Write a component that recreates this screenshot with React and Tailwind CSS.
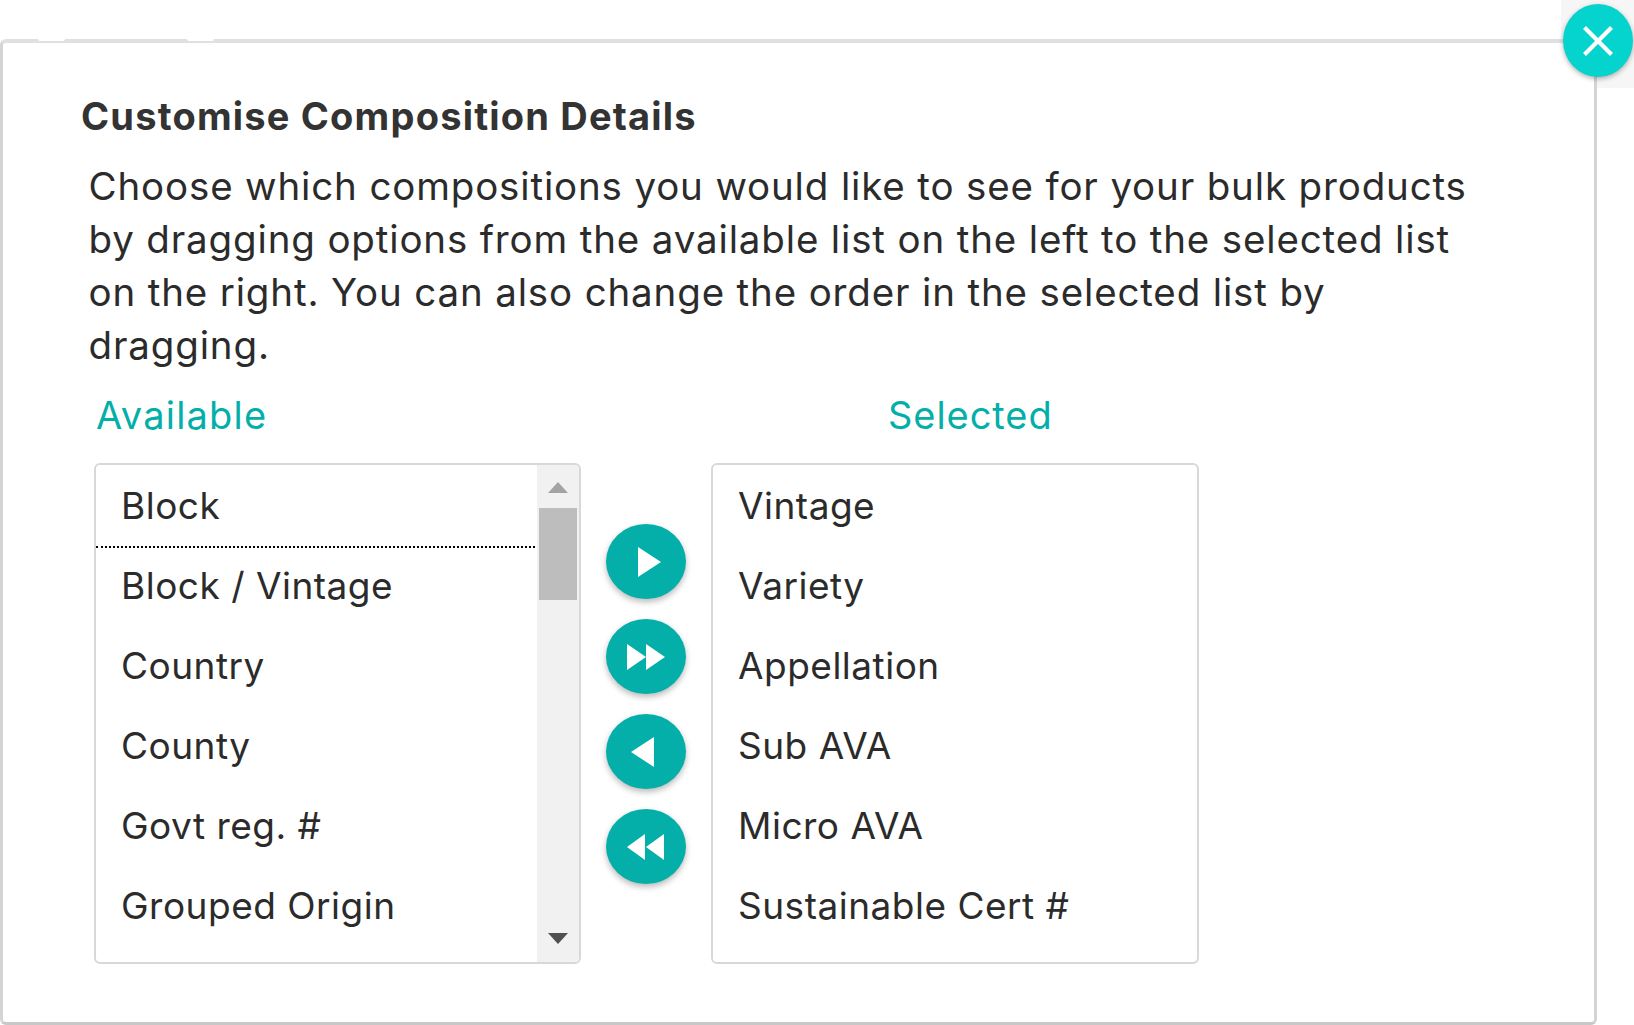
function Tri({ w, h, points, className = "" }) {
  return (
    <svg width={w} height={h} viewBox={`0 0 ${w} ${h}`} className={className}>
      <polygon points={points} fill="currentColor" />
    </svg>
  );
}

function RoundButton({ children }) {
  return (
    <div className="flex h-[75px] w-[80px] items-center justify-center rounded-[50%] bg-[#04afa9] text-white shadow-[0_3px_6px_rgba(0,0,0,0.28)]">
      {children}
    </div>
  );
}

function Item({ label, divider }) {
  return (
    <div
      className={
        divider
          ? "-mb-[2px] mr-[2px] flex h-[82px] items-center border-b-2 border-dotted border-black pl-[25px]"
          : "flex h-[80px] items-center pl-[25px]"
      }
    >
      {label}
    </div>
  );
}

const left = ["Block", "Block / Vintage", "Country", "County", "Govt reg. #", "Grouped Origin"];
const right = ["Vintage", "Variety", "Appellation", "Sub AVA", "Micro AVA", "Sustainable Cert #"];

export default function App() {
  return (
    <div className="relative h-[1025px] w-[1634px] overflow-hidden bg-white font-['Inter',sans-serif] text-[#2b2b2b]">
      <div className="absolute right-0 top-0 h-[88px] w-[73px] bg-[#f6f6f6]" />
      <div className="relative mt-[39px] h-[986px] w-[1597px] rounded-[6px] border-x-[3px] border-b-[3px] border-t-[4px] border-x-[#d4d4d4] border-b-[#c8c8c8] border-t-[#e0e0e0] bg-white">
        <h1 className="ml-[78px] mt-[48px] text-[38px] font-bold leading-[50px] tracking-[1.2px] text-[#333333]">
          Customise Composition Details
        </h1>
        <p className="ml-[85.5px] mt-[19px] w-[1430px] text-[38.5px] leading-[53px] tracking-[0.85px]">
          Choose which compositions you would like to see for your bulk products
          <br />
          by dragging options from the available list on the left to the selected list
          <br />
          on the right. You can also change the order in the selected list by
          <br />
          dragging.
        </p>
        <div className="ml-[93px] mt-[17px] flex text-[38px] leading-[53px] tracking-[1.2px] text-[#04afa9]">
          <div className="w-[792px]">Available</div>
          <div className="tracking-[0.95px]">Selected</div>
        </div>
        <div className="ml-[91px] mt-[21px] flex items-start gap-[25px] text-[37px] tracking-[0.5px]">
          <div className="flex h-[501px] w-[487px] overflow-hidden rounded-[6px] border-2 border-[#d8d8d8]">
            <div className="flex-1 pt-px">
              {left.map((l, i) => (
                <Item key={l} label={l} divider={i === 0} />
              ))}
            </div>
            <div className="flex w-[42px] flex-col items-center bg-[#f1f1f1]">
              <div className="mt-[17px] flex h-[26px] items-start text-[#a3a3a3]">
                <Tri w={20} h={11} points="10,0 20,11 0,11" />
              </div>
              <div className="h-[92px] w-[38px] bg-[#bdbdbd]" />
              <div className="mt-auto mb-[18px] flex text-[#505050]">
                <Tri w={20} h={11} points="0,0 20,0 10,11" />
              </div>
            </div>
          </div>
          <div className="mt-[61px] flex flex-col gap-[20px]">
            <RoundButton>
              <Tri w={23} h={30} points="0,0 23,15 0,30" className="ml-[7px]" />
            </RoundButton>
            <RoundButton>
              <svg width="38" height="26" viewBox="0 0 38 26">
                <polygon points="0,0 19,13 0,26" fill="currentColor" />
                <polygon points="19,0 38,13 19,26" fill="currentColor" />
              </svg>
            </RoundButton>
            <RoundButton>
              <Tri w={23} h={30} points="23,0 0,15 23,30" className="mr-[7px]" />
            </RoundButton>
            <RoundButton>
              <svg width="37" height="26" viewBox="0 0 37 26" className="mr-[2px]">
                <polygon points="18,0 0,13 18,26" fill="currentColor" />
                <polygon points="37,0 19,13 37,26" fill="currentColor" />
              </svg>
            </RoundButton>
          </div>
          <div className="h-[501px] w-[488px] rounded-[6px] border-2 border-[#d8d8d8] pt-px">
            {right.map((l) => (
              <Item key={l} label={l} />
            ))}
          </div>
        </div>
      </div>
      <div className="absolute left-[38px] top-[39px] h-[2px] w-[27px] rounded-b-full bg-white" />
      <div className="absolute left-[187px] top-[39px] h-[2px] w-[27px] rounded-b-full bg-white" />
      <div className="absolute left-[1563px] top-[4px] flex h-[73px] w-[70px] items-center justify-center rounded-[50%] bg-[#05d3ce] text-white shadow-[0_2px_5px_rgba(0,0,0,0.3)]">
        <svg width="30" height="30" viewBox="0 0 30 30" fill="none" stroke="currentColor" strokeWidth="4.2">
          <path d="M1.5 1.5 L28.5 28.5 M28.5 1.5 L1.5 28.5" />
        </svg>
      </div>
    </div>
  );
}
